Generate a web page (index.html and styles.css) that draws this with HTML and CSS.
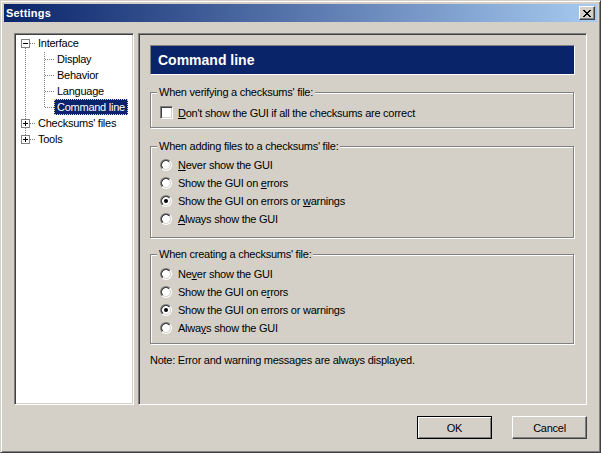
FILE: index.html
```html
<!DOCTYPE html>
<html>
<head>
<meta charset="utf-8">
<title>Settings</title>
<link rel="stylesheet" href="styles.css">
</head>
<body>
<div class="window">
  <div class="titlebar">
    <span class="title">Settings</span>
    <button class="close" aria-label="Close">
      <svg width="8" height="7" viewBox="0 0 8 7" shape-rendering="crispEdges">
        <rect x="0" y="0" width="2" height="1"/><rect x="6" y="0" width="2" height="1"/>
        <rect x="1" y="1" width="2" height="1"/><rect x="5" y="1" width="2" height="1"/>
        <rect x="2" y="2" width="4" height="1"/>
        <rect x="3" y="3" width="2" height="1"/>
        <rect x="2" y="4" width="4" height="1"/>
        <rect x="1" y="5" width="2" height="1"/><rect x="5" y="5" width="2" height="1"/>
        <rect x="0" y="6" width="2" height="1"/><rect x="6" y="6" width="2" height="1"/>
      </svg>
    </button>
  </div>

  <div class="main">
    <div class="tree">
      <svg class="tree-lines" width="118" height="200" viewBox="0 0 118 200" shape-rendering="crispEdges">
        <g stroke="#808080" stroke-width="1" stroke-dasharray="1 1" fill="none">
          <path d="M9.5 13 V100"/>
          <path d="M14 8.5 H20"/>
          <path d="M14 88.5 H20"/>
          <path d="M14 104.5 H20"/>
          <path d="M28.5 17 V73"/>
          <path d="M29 24.5 H38"/>
          <path d="M29 40.5 H38"/>
          <path d="M29 56.5 H38"/>
          <path d="M29 72.5 H38"/>
        </g>
        <g fill="#fff" stroke="#808080">
          <rect x="5.5" y="4.5" width="8" height="8"/>
          <rect x="5.5" y="84.5" width="8" height="8"/>
          <rect x="5.5" y="100.5" width="8" height="8"/>
        </g>
        <g stroke="#000" fill="none">
          <path d="M7 8.5 H12"/>
          <path d="M7 88.5 H12 M9.5 86 V91"/>
          <path d="M7 104.5 H12 M9.5 102 V107"/>
        </g>
      </svg>
      <div class="node root">Interface</div>
      <div class="node child"><span class="label">Display</span></div>
      <div class="node child"><span class="label">Behavior</span></div>
      <div class="node child"><span class="label">Language</span></div>
      <div class="node child"><span class="label selected">Command line</span></div>
      <div class="node root">Checksums' files</div>
      <div class="node root">Tools</div>
    </div>

    <div class="panel">
      <div class="header">Command line</div>

      <fieldset class="group g1">
        <legend>When verifying a checksums' file:</legend>
        <label class="opt check-opt">
          <span class="checkbox"></span>
          <span><u>D</u>on't show the GUI if all the checksums are correct</span>
        </label>
      </fieldset>

      <fieldset class="group g2">
        <legend>When adding files to a checksums' file:</legend>
        <label class="opt"><span class="radio"></span><span><u>N</u>ever show the GUI</span></label>
        <label class="opt"><span class="radio"></span><span>Show the GUI on <u>e</u>rrors</span></label>
        <label class="opt"><span class="radio on"></span><span>Show the GUI on errors or <u>w</u>arnings</span></label>
        <label class="opt"><span class="radio"></span><span><u>A</u>lways show the GUI</span></label>
      </fieldset>

      <fieldset class="group g3">
        <legend>When creating a checksums' file:</legend>
        <label class="opt"><span class="radio"></span><span>Ne<u>v</u>er show the GUI</span></label>
        <label class="opt"><span class="radio"></span><span>Show the GUI on e<u>r</u>rors</span></label>
        <label class="opt"><span class="radio on"></span><span>Show the GUI on errors or warnings</span></label>
        <label class="opt"><span class="radio"></span><span>Alwa<u>y</u>s show the GUI</span></label>
      </fieldset>

      <p class="note">Note: Error and warning messages are always displayed.</p>
    </div>
  </div>

  <div class="buttons">
    <button class="btn default">OK</button>
    <button class="btn">Cancel</button>
  </div>
</div>
</body>
</html>
```

FILE: styles.css
```css
* { box-sizing: border-box; }
html, body { margin: 0; padding: 0; }
body {
  background: #d4d0c8;
  font-family: "Liberation Sans", Arial, sans-serif;
  font-size: 11px;
  letter-spacing: -0.25px;
  color: #000;
}

.window {
  width: 601px;
  height: 453px;
  border: 1px solid;
  border-color: #d4d0c8 #404040 #404040 #d4d0c8;
  box-shadow: inset 1px 1px 0 #fff, inset -1px -1px 0 #808080;
  padding: 3px;
  background: #d4d0c8;
  display: flex;
  flex-direction: column;
}

.titlebar {
  height: 18px;
  flex: none;
  display: flex;
  align-items: center;
  justify-content: space-between;
  padding: 0 2px;
  background: linear-gradient(to right, #0a246a, #a6caf0);
}
.title {
  color: #fff;
  font-weight: bold;
  letter-spacing: 0.2px;
  line-height: 18px;
}
.close {
  width: 16px;
  height: 14px;
  padding: 0;
  margin: 0;
  border: 1px solid;
  border-color: #fff #404040 #404040 #fff;
  box-shadow: inset -1px -1px 0 #808080;
  background: #d4d0c8;
  display: flex;
  align-items: center;
  justify-content: center;
}
.close svg { display: block; fill: #000; }

.main {
  height: 372px;
  flex: none;
  margin: 11px 10px 0;
  display: flex;
  gap: 4px;
}

.tree {
  position: relative;
  width: 120px;
  flex: none;
  background: #fff;
  border: 1px solid;
  border-color: #808080 #fff #fff #808080;
  box-shadow: inset 1px 1px 0 #404040, inset -1px -1px 0 #d4d0c8;
  padding: 1px;
}
.tree-lines {
  position: absolute;
  left: 1px;
  top: 1px;
}
.node {
  position: relative;
  height: 16px;
  line-height: 16px;
  white-space: nowrap;
}
.root { padding-left: 22px; }
.child { padding-left: 38px; }
.label {
  display: inline-block;
  height: 16px;
  line-height: 14px;
  padding: 0 2px;
  border: 1px solid transparent;
}
.label.selected {
  background: #0a246a;
  color: #fff;
  border: 1px dotted #e9d68c;
}

.panel {
  width: 449px;
  flex: none;
  border: 1px solid;
  border-color: #808080 #fff #fff #808080;
  box-shadow: inset 1px 1px 0 #404040, inset -1px -1px 0 #d4d0c8;
  padding: 11px;
}

.header {
  height: 30px;
  display: flex;
  align-items: center;
  padding-left: 7px;
  background: #0a246a;
  border: 1px solid;
  border-color: #808080 #fff #fff #808080;
  color: #fff;
  font-weight: bold;
  font-size: 14px;
  letter-spacing: 0;
}

.group {
  margin: 0 1px 0 0;
  min-width: 0;
  border: 1px solid #808080;
  box-shadow: inset 1px 1px 0 #fff, 1px 1px 0 #fff;
  padding: 0 0 0 9px;
}
.group legend {
  padding: 0 2px;
  margin-left: -3px;
  line-height: 13px;
  background: #d4d0c8;
}
.g1 { margin-top: 11px; padding-top: 7px; padding-bottom: 8px; }
.g2 { margin-top: 12px; padding-top: 3px; padding-bottom: 9px; }
.g3 { margin-top: 10px; padding-top: 4px; padding-bottom: 6px; }

.opt {
  display: flex;
  align-items: center;
  gap: 6px;
  height: 18px;
  white-space: nowrap;
}
.check-opt { height: 13px; gap: 5px; }

.checkbox {
  width: 13px;
  height: 13px;
  flex: none;
  background: #fff;
  border: 1px solid;
  border-color: #808080 #fff #fff #808080;
  box-shadow: inset 1px 1px 0 #404040, inset -1px -1px 0 #d4d0c8;
}

.radio {
  width: 12px;
  height: 12px;
  flex: none;
  border-radius: 50%;
  background:
    radial-gradient(circle at 50% 50%, #fff 0 3.6px, transparent 4.1px),
    linear-gradient(135deg, #404040 50%, #d4d0c8 50%);
  box-shadow: 0 0 0 0 transparent;
  position: relative;
  border: 1px solid;
  border-color: #808080 #fff #fff #808080;
}
.radio.on::after {
  content: "";
  position: absolute;
  left: 3px;
  top: 3px;
  width: 4px;
  height: 4px;
  border-radius: 50%;
  background: #000;
}

.note {
  margin: 10px 0 0;
  line-height: 13px;
}

.buttons {
  margin: 11px 10px 0;
  display: flex;
  justify-content: flex-end;
  gap: 20px;
}
.btn {
  width: 75px;
  height: 23px;
  padding: 0;
  margin: 0;
  font: inherit;
  letter-spacing: inherit;
  color: #000;
  background: #d4d0c8;
  border: 1px solid;
  border-color: #fff #404040 #404040 #fff;
  box-shadow: inset -1px -1px 0 #808080;
}
.btn.default {
  border: 1px solid #000;
  box-shadow: inset 1px 1px 0 #fff, inset -1px -1px 0 #808080;
}
```
